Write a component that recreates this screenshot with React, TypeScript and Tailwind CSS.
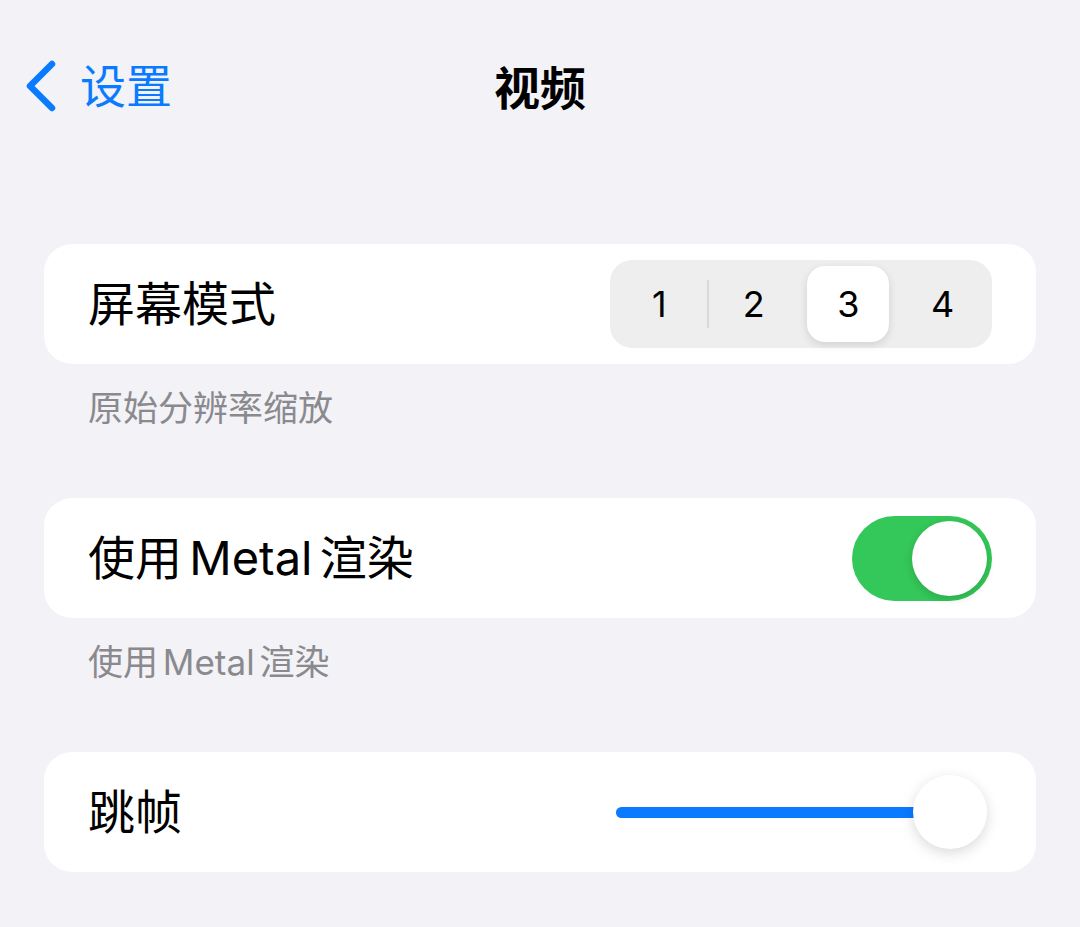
import { useState } from 'react';

const font = { fontFamily: 'Inter, "Noto Sans CJK SC", sans-serif' };

function Segmented({ value, onChange }: { value: number; onChange: (v: number) => void }) {
  const items = [1, 2, 3, 4];
  return (
    <div className="flex h-[88px] w-[382px] items-center rounded-[22px] bg-[#eeeeef] px-[2px]">
      {items.map((n, i) => {
        const active = n === value;
        const showDivider = i > 0 && n !== value && items[i - 1] !== value;
        return (
          <div key={n} className="relative flex h-full flex-1 items-center justify-center">
            {showDivider && <div className="absolute left-0 top-[20px] h-[48px] w-[2px] bg-[#d8d8db]" />}
            <button
              onClick={() => onChange(n)}
              className={`flex h-[76px] w-[82px] items-center justify-center rounded-[18px] text-[36px] text-black ${
                active ? 'bg-white shadow-[0_3px_8px_rgba(0,0,0,0.12)]' : ''
              }`}
            >
              {n}
            </button>
          </div>
        );
      })}
    </div>
  );
}

function Toggle({ on, onChange }: { on: boolean; onChange: (v: boolean) => void }) {
  return (
    <button
      onClick={() => onChange(!on)}
      className={`flex h-[85px] w-[140px] items-center rounded-full px-[5px] ${
        on ? 'justify-end bg-[#34c759]' : 'justify-start bg-[#e9e9ea]'
      }`}
    >
      <span className="h-[75px] w-[75px] rounded-full bg-white shadow-[0_3px_8px_rgba(0,0,0,0.15)]" />
    </button>
  );
}

function Row({ label, children }: { label: string; children: React.ReactNode }) {
  return (
    <div className="flex h-[120px] items-center justify-between rounded-[28px] bg-white px-[44px]">
      <span className="text-[47px] text-black [word-spacing:-6px]">{label}</span>
      {children}
    </div>
  );
}

export default function App() {
  const [mode, setMode] = useState(3);
  const [metal, setMetal] = useState(true);
  const [skip] = useState(1);

  return (
    <div className="min-h-[927px] w-full bg-[#f2f2f7]" style={font}>
      <div className="relative flex h-[176px] items-start justify-center pt-[58px]">
        <button className="absolute left-[24px] top-[60px] flex items-center gap-[22px] text-[#0a7aff]">
          <svg width="34" height="52" viewBox="0 0 34 52" fill="none">
            <path d="M28 4 L6 26 L28 48" stroke="#0a7aff" strokeWidth="6.5" strokeLinecap="round" strokeLinejoin="round" />
          </svg>
          <span className="text-[46px] leading-[52px]">设置</span>
        </button>
        <h1 className="text-[46px] font-bold leading-[60px] text-black">视频</h1>
      </div>

      <div className="px-[44px] pt-[68px]">
        <Row label="屏幕模式">
          <Segmented value={mode} onChange={setMode} />
        </Row>
        <p className="pl-[44px] pt-[22px] text-[35px] leading-[44px] text-[#8a8a8e]">原始分辨率缩放</p>

        <div className="mt-[68px]">
          <Row label="使用 Metal 渲染">
            <Toggle on={metal} onChange={setMetal} />
          </Row>
        </div>
        <p className="pl-[44px] pt-[22px] text-[35px] leading-[44px] text-[#8a8a8e] [word-spacing:-5px]">使用 Metal 渲染</p>

        <div className="mt-[68px]">
          <Row label="跳帧">
            <div className="relative mr-[42px] flex h-[80px] w-[334px] items-center">
              <div className="h-[11px] w-full rounded-full bg-[#e3e3e8]" />
              <div
                className="absolute left-0 h-[11px] rounded-full bg-[#0a7aff]"
                style={{ width: `${skip * 100}%` }}
              />
              <div
                className="absolute h-[74px] w-[74px] -translate-x-1/2 rounded-full bg-white shadow-[0_4px_14px_rgba(0,0,0,0.15)]"
                style={{ left: `${skip * 100}%` }}
              />
            </div>
          </Row>
        </div>
      </div>
    </div>
  );
}
